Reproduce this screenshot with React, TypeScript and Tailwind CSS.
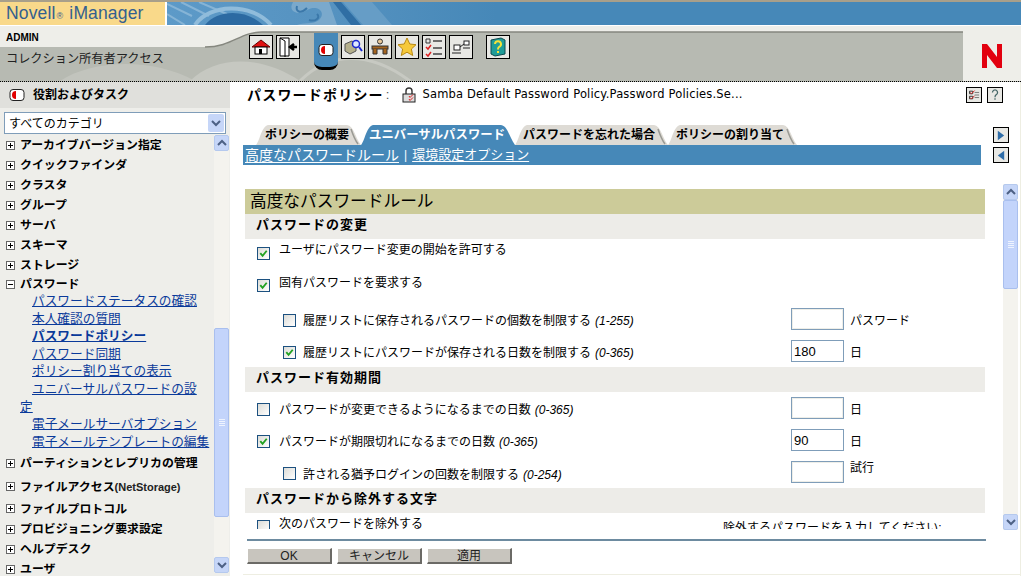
import React from 'react'

const Check = () => (
  <svg viewBox="0 0 12 12" className="w-full h-full">
    <path d="M2.5 5.5 L5 8.5 L9.5 3" fill="none" stroke="#21a121" strokeWidth="2" />
  </svg>
)

const CheckBox = ({ checked }: { checked?: boolean }) => (
  <span className="w-[13px] h-[13px] shrink-0 translate-y-[1px] border border-[#1c5180] bg-gradient-to-br from-[#dcdcd7] to-white">
    {checked && <Check />}
  </span>
)

const ToolButton = ({ children, className = '' }: { children: React.ReactNode; className?: string }) => (
  <div className={`w-[24px] h-[24px] shrink-0 border border-black bg-[#e8e8e4] ${className}`}>
    <svg viewBox="0 0 22 22" className="w-full h-full">{children}</svg>
  </div>
)

const RoleIcon = ({ className = '' }: { className?: string }) => (
  <svg viewBox="0 0 16 14" className={className}>
    <rect x="1" y="1.5" width="14" height="11" rx="3" fill="#fff" stroke="#222" />
    <path d="M7 3 A4 4 0 0 0 7 11 Z" fill="#e00000" />
  </svg>
)

const ScrollButton = ({ up }: { up?: boolean }) => (
  <div className="h-[16px] shrink-0 rounded-[2px] border border-[#b5c9ee] bg-[#c6d6f8] flex items-center justify-center">
    <svg viewBox="0 0 10 8" className="w-[10px] h-[8px]">
      <path d={up ? 'M1 6 L5 2 L9 6' : 'M1 2 L5 6 L9 2'} fill="none" stroke="#4d6185" strokeWidth="2" />
    </svg>
  </div>
)

const Grip = () => (
  <div className="flex flex-col gap-[1px]">
    {[0, 1, 2, 3].map((i) => (
      <div key={i} className="w-[6px] h-px bg-[#eef3fe]" />
    ))}
  </div>
)

const Scrollbar = ({ before, thumb, className = '' }: { before: number; thumb: number; className?: string }) => (
  <div className={`w-[15px] flex flex-col bg-[#f4f3ee] ${className}`}>
    <ScrollButton up />
    <div style={{ height: before }} className="shrink-0" />
    <div style={{ height: thumb }} className="shrink-0 rounded-[2px] border border-[#a9bfee] bg-[#c3d4fb] flex items-center justify-center">
      <Grip />
    </div>
    <div className="flex-1" />
    <ScrollButton />
  </div>
)

const Tree = ({ label, open, h }: { label: React.ReactNode; open?: boolean; h: number }) => (
  <div style={{ height: h }} className="flex items-center pl-[6px] shrink-0">
    <span className="relative w-[9px] h-[9px] border border-[#666] bg-white shrink-0">
      <span className="absolute left-[1px] top-[3px] w-[5px] h-px bg-black" />
      {!open && <span className="absolute left-[3px] top-[1px] w-px h-[5px] bg-black" />}
    </span>
    <span className="ml-[5px] mt-[2px] text-[11.9px] font-bold text-black whitespace-nowrap">{label}</span>
  </div>
)

const SideLink = ({ children, bold }: { children: React.ReactNode; bold?: boolean }) => (
  <div className="pl-[20px] indent-[12px] text-[12.7px] leading-[17.6px] whitespace-nowrap">
    <a className={`underline underline-offset-1 text-[#0a3a9a] ${bold ? 'font-bold' : ''}`}>{children}</a>
  </div>
)

const Sidebar = () => (
  <aside className="w-[230px] shrink-0 h-[494px] bg-[#eeeeea] flex flex-col overflow-hidden">
    <div className="h-[26px] shrink-0 bg-[#e0e0dc] flex items-center pl-[9px]">
      <RoleIcon className="w-[16px] h-[14px]" />
      <span className="ml-[8px] text-[12px] font-bold text-black">役割およびタスク</span>
    </div>
    <div className="h-[27px] shrink-0 pt-[4px] px-[4px]">
      <div className="h-[22px] border border-[#7f9db9] bg-white flex items-center justify-between pl-[4px] pr-px">
        <span className="mt-[2px] text-[12px] text-black">すべてのカテゴリ</span>
        <div className="w-[16px] h-[18px] rounded-[2px] bg-[#c6d6f8] flex items-center justify-center">
          <svg viewBox="0 0 10 8" className="w-[10px] h-[8px]">
            <path d="M1 2 L5 6 L9 2" fill="none" stroke="#4d6185" strokeWidth="2" />
          </svg>
        </div>
      </div>
    </div>
    <div className="flex-1 flex min-h-0">
      <div className="w-[214px] shrink-0 flex flex-col overflow-hidden">
        <Tree h={20} label="アーカイブバージョン指定" />
        <Tree h={20} label="クイックファインダ" />
        <Tree h={20} label="クラスタ" />
        <Tree h={20} label="グループ" />
        <Tree h={20} label="サーバ" />
        <Tree h={20} label="スキーマ" />
        <Tree h={20} label="ストレージ" />
        <Tree h={18} open label="パスワード" />
        <SideLink>パスワードステータスの確認</SideLink>
        <SideLink>本人確認の質問</SideLink>
        <SideLink bold>パスワードポリシー</SideLink>
        <SideLink>パスワード同期</SideLink>
        <SideLink>ポリシー割り当ての表示</SideLink>
        <SideLink>ユニバーサルパスワードの設<br />定</SideLink>
        <SideLink>電子メールサーバオプション</SideLink>
        <SideLink>電子メールテンプレートの編集</SideLink>
        <Tree h={24} label="パーティションとレプリカの管理" />
        <Tree h={23} label={<>ファイルアクセス<span className="text-[11px] text-[#222]">(NetStorage)</span></>} />
        <Tree h={21} label="ファイルプロトコル" />
        <Tree h={20} label="プロビジョニング要求設定" />
        <Tree h={20} label="ヘルプデスク" />
        <Tree h={20} label="ユーザ" />
      </div>
      <Scrollbar before={177} thumb={189} className="h-[438px]" />
    </div>
  </aside>
)

const Tab = ({ label, active, w, first }: { label: string; active?: boolean; w: number; first?: boolean }) => (
  <div style={{ width: w }} className="relative h-[20px] shrink-0">
    <svg viewBox={`0 0 ${w} 20`} className="absolute inset-0 w-full h-full" preserveAspectRatio="none">
      <path
        d={`M0 20 C4 16 5 2 12 0 L${w - 14} 0 C${w - 7} 1 ${w - 6} 12 ${w} 20 Z`}
        fill={active ? '#4688b8' : '#dedbd5'}
      />
      {!active && <path d={`M${w - 10} 4 C${w - 8} 10 ${w - 6} 15 ${w - 3} 19`} fill="none" stroke="#9a9a94" strokeWidth="1.5" />}
    </svg>
    <span className={`absolute top-0 bottom-0 flex items-center font-bold whitespace-nowrap ${first ? 'left-[9px]' : 'left-[8px]'} ${active ? 'text-white text-[12.4px]' : 'text-black text-[12px]'}`}>
      {label}
    </span>
  </div>
)

const Section = ({ title }: { title: string }) => (
  <div className="h-[25px] shrink-0 bg-[#edece8] flex items-center pl-[11px] pb-[4px] text-[13px] font-bold tracking-[1px] text-black">
    {title}
  </div>
)

const Row = ({
  h, level, checked, label, range, shift = 0, value, unit, hasInput, unitShift = 0,
}: {
  h: number; level?: number; checked?: boolean; label: string; range?: string; shift?: number
  value?: string; unit?: string; hasInput?: boolean; unitShift?: number
}) => (
  <div style={{ height: h }} className={`flex items-center shrink-0 text-[12px] text-black ${level ? 'pl-[38px] gap-[7px]' : 'pl-[12px] gap-[9px]'}`}>
    <CheckBox checked={checked} />
    <span style={{ transform: `translateY(${shift + 2}px)` }} className="whitespace-nowrap">
      {label}
      {range && <i className="ml-[4px]">{range}</i>}
    </span>
    {hasInput && (
      <>
        <input
          readOnly
          defaultValue={value}
          className={`ml-auto w-[53px] h-[22px] border border-[#7f9db9] px-[2px] text-[13px] text-black outline-none bg-white ${value ? '' : 'shadow-[inset_1px_1px_0_#eeeee8,inset_-1px_-1px_0_#eeeee8]'}`}
        />
        <span
          style={{ transform: `translateY(${unitShift + 2}px)` }}
          className={`w-[135px] whitespace-nowrap ${level ? '-ml-[1px]' : '-ml-[3px]'}`}
        >
          {unit}
        </span>
      </>
    )}
  </div>
)

const FormPanel = () => (
  <div className="w-[740px] h-[340px] mt-[5px] flex flex-col overflow-hidden">
    <div className="h-[25px] shrink-0 bg-[#cccb99] flex items-center pl-[5px] text-[16.7px] text-black">高度なパスワードルール</div>
    <Section title="パスワードの変更" />
    <Row h={26} checked shift={-4} label="ユーザにパスワード変更の開始を許可する" />
    <Row h={38} checked shift={-3} label="固有パスワードを要求する" />
    <Row h={32} level={1} label="履歴リストに保存されるパスワードの個数を制限する" range="(1-255)" hasInput unit="パスワード" />
    <Row h={32} level={1} checked label="履歴リストにパスワードが保存される日数を制限する" range="(0-365)" hasInput value="180" unit="日" />
    <Section title="パスワード有効期間" />
    <Row h={32} label="パスワードが変更できるようになるまでの日数" range="(0-365)" hasInput unit="日" />
    <Row h={32} checked label="パスワードが期限切れになるまでの日数" range="(0-365)" hasInput value="90" unit="日" />
    <Row h={32} level={1} shift={1} label="許される猶予ログインの回数を制限する" range="(0-254)" hasInput unit="試行" unitShift={-6} />
    <Section title="パスワードから除外する文字" />
    <div className="h-[24px] shrink-0 flex items-center pl-[12px] gap-[9px] text-[12px] text-black">
      <CheckBox />
      <span className="-translate-y-[1px]">次のパスワードを除外する</span>
      <span className="ml-[291px] translate-y-[3px] whitespace-nowrap">除外するパスワードを入力してください:</span>
    </div>
  </div>
)

const Main = () => (
  <main className="flex-1 h-[494px] pl-[13px] flex flex-col overflow-hidden border-r border-[#eeeee2]">
    <div className="h-[26px] shrink-0 flex items-center pl-[4px] pr-[17px]">
      <span className="text-[14px] font-bold tracking-[1.2px] text-black">パスワードポリシー</span>
      <span className="ml-[2px] text-[13px] text-[#555]">:</span>
      <svg viewBox="0 0 16 16" className="ml-[12px] w-[16px] h-[16px]">
        <path d="M5 7 V4 a3 3 0 0 1 6 0 V7" fill="none" stroke="#333" strokeWidth="1.4" />
        <rect x="2" y="7" width="12" height="8" fill="#ddd" stroke="#222" />
        <path d="M8 9 l1 1.5 l3 -3 M8 12 l1 1.5 l3 -3" fill="none" stroke="#d22" />
      </svg>
      <span className="ml-[5px] text-[11.5px] tracking-[0.18px] font-['DejaVu_Sans',sans-serif] text-black">Samba Default Password Policy.Password Policies.Se...</span>
      <ToolButton className="ml-auto !w-[16px] !h-[16px]">
        <path d="M4 5 h5 v4 h-5 z M4 13 h5 v4 h-5 z" fill="none" stroke="#333" strokeWidth="1.5" />
        <path d="M5 7 l2 2 l5 -5 M5 15 l2 2 l5 -5" fill="none" stroke="#d22" strokeWidth="1.5" />
        <path d="M12 7 h7 M12 11 h7 M12 15 h7" stroke="#777" strokeWidth="1.5" />
      </ToolButton>
      <ToolButton className="ml-[5px] !w-[16px] !h-[16px]">
        <path d="M7 7 a4 4 0 1 1 6 3.5 c-2 1 -2 2 -2 4 M11 16 v2.5" fill="none" stroke="#466" strokeWidth="2" />
      </ToolButton>
    </div>
    <div className="mt-[17px] flex shrink-0">
      <div className="w-[738px] shrink-0">
        <div className="flex h-[20px] pl-[13px]">
          <Tab first w={105} label="ポリシーの概要" />
          <Tab active w={154} label="ユニバーサルパスワード" />
          <Tab w={153} label="パスワードを忘れた場合" />
          <Tab w={129} label="ポリシーの割り当て" />
        </div>
        <div className="h-[20px] bg-[#4688b8] flex items-center pl-[2px] text-white">
          <a className="text-[14px] underline underline-offset-2">高度なパスワードルール</a>
          <span className="mx-[5px] text-[12px]">|</span>
          <a className="text-[13px] underline underline-offset-2">環境設定オプション</a>
        </div>
      </div>
      <div className="ml-[12px] pt-[2px] flex flex-col gap-[4px]">
        <div className="w-[16px] h-[16px] border border-black bg-[#e8e8e4] flex items-center justify-center">
          <svg viewBox="0 0 10 12" className="w-[8px] h-[11px]"><path d="M1 0 L9 6 L1 12 Z" fill="#2f6da8" /></svg>
        </div>
        <div className="w-[16px] h-[16px] border border-black bg-[#e8e8e4] flex items-center justify-center">
          <svg viewBox="0 0 10 12" className="w-[8px] h-[11px]"><path d="M9 0 L1 6 L9 12 Z" fill="#2f6da8" /></svg>
        </div>
      </div>
    </div>
    <div className="mt-[19px] flex shrink-0 h-[346px] pl-[2px]">
      <FormPanel />
      <Scrollbar before={0} thumb={89} className="ml-[18px] h-[346px]" />
    </div>
    <div className="mt-[9px] ml-[4px] w-[739px] h-[2px] shrink-0 bg-[#6d8ba0]" />
    <div className="mt-[7px] ml-[4px] flex gap-[5px] shrink-0">
      {['OK', 'キャンセル', '適用'].map((b) => (
        <button key={b} className="w-[85px] h-[16px] bg-[#c8c5be] border-r-2 border-b-2 border-[#6b6a66] border-t border-l border-t-white border-l-white flex items-center justify-center text-[12px] text-[#222]">
          {b}
        </button>
      ))}
    </div>
    <div className="mt-[10px] h-px shrink-0 bg-[#eeeee2]" />
  </main>
)

const Header = () => (
  <header className="shrink-0">
    <div className="h-[26px] border-t-2 border-[#a89f8a] border-b border-b-white flex bg-[#4688b8]">
      <div className="w-[165px] shrink-0 bg-[#f9d98a] pl-[6px] flex items-center text-[17.5px] tracking-[0.15px] text-[#33608f]">
        Novell<span className="text-[9px] mt-[6px] mx-[1px]">®</span>&nbsp;iManager
      </div>
      <div className="w-[2px] bg-white" />
      <div className="relative w-[330px] overflow-hidden bg-gradient-to-r from-[#5d9ac8] via-[#5592c0] to-[#4688b8]">
        <svg viewBox="0 0 330 23" className="absolute inset-0 w-full h-full">
          <path d="M0 2 L25 14 M14 0 L42 14 M32 0 L60 12 M0 12 L18 23" stroke="#86b4d6" strokeWidth="2" fill="none" />
          <path d="M38 23 C50 8 78 6 96 23 Z" fill="#2c6aa2" />
          <path d="M28 23 C42 2 84 0 104 23" fill="none" stroke="#90bcdb" strokeWidth="4" />
          <path d="M126 0 C120 10 132 14 140 8 C150 2 160 10 152 18 C146 23 136 20 130 23 H170 L162 0 Z" fill="#7aa9cc" />
          <path d="M130 4 C128 10 134 12 140 6 M150 12 C154 16 148 20 142 18" fill="none" stroke="#3b78aa" strokeWidth="2" />
          <path d="M166 0 L174 0 L194 23 L184 23 Z" fill="#2f6ea4" />
          <path d="M176 0 H205 L225 23 H196 Z" fill="#6fa2c9" opacity="0.7" />
        </svg>
      </div>
    </div>
    <div className="relative h-[56px] flex bg-[#b7bab2] border-b border-dotted border-black">
      <svg viewBox="0 0 963 55" className="absolute inset-0 w-[963px] h-[55px]">
        <path d="M60 55 C90 35 150 30 195 55 Z" fill="#c2c4bd" />
        <path d="M190 55 C215 30 260 28 300 55 Z" fill="#c6c8c1" />
        <path d="M300 55 C330 25 370 25 410 55" fill="none" stroke="#c7c9c2" strokeWidth="3" />
        <path d="M0 0 H963 V6 H262 C240 6 232 21 205 21 H0 Z" fill="#eeeee9" />
        <path d="M205 21 C232 21 240 6 262 6 H963" fill="none" stroke="#85877f" strokeWidth="1.5" />
      </svg>
      <div className="relative w-[249px] shrink-0 pl-[6px] flex flex-col">
        <span className="mt-[5px] h-[14px] leading-[14px] text-[10px] font-bold text-black">ADMIN</span>
        <span className="mt-[5px] text-[12.2px] text-[#222]">コレクション所有者アクセス</span>
      </div>
      <div className="relative flex items-start pt-[9px] gap-[3px]">
        <ToolButton>
          <path d="M2 11 L11 4 L20 11 Z" fill="#e01010" stroke="#600" />
          <rect x="5" y="11" width="12" height="7" fill="#fff" stroke="#000" />
          <rect x="9" y="13" width="3" height="5" fill="#000" />
        </ToolButton>
        <ToolButton>
          <path d="M3 2 H12 V20 H3 Z M3 2 L8 5 V21" fill="#fff" stroke="#000" />
          <path d="M20 11 H14 M17 8 L13 11 L17 14" fill="none" stroke="#000" strokeWidth="2.5" />
        </ToolButton>
        <div className="-mt-[2px] ml-[11px] w-[24px] h-[37px] bg-[#4688b8] border-b-[3px] border-black rounded-b-[8px] flex items-center justify-center">
          <RoleIcon className="w-[16px] h-[14px]" />
        </div>
        <ToolButton>
          <path d="M3 8 L10 5 L14 8 V15 L8 18 L3 15 Z" fill="#b5b08c" stroke="#555" />
          <circle cx="14" cy="8" r="3.5" fill="#dfe8ff" stroke="#1a28d0" strokeWidth="1.5" />
          <path d="M17 11 L20 15" stroke="#1a28d0" strokeWidth="2" />
        </ToolButton>
        <ToolButton>
          <circle cx="11" cy="5.5" r="2.5" fill="#e8c89a" stroke="#333" />
          <rect x="3" y="10" width="16" height="3" fill="#a5651f" stroke="#333" />
          <path d="M4 13 V18 H8 V13 M14 13 V18 H18 V13" fill="#a5651f" stroke="#333" />
        </ToolButton>
        <ToolButton>
          <path d="M11 2 L13.8 8 L20 8.7 L15.4 13 L16.7 19.5 L11 16.2 L5.3 19.5 L6.6 13 L2 8.7 L8.2 8 Z" fill="#f6c93a" stroke="#b98a14" />
        </ToolButton>
        <ToolButton>
          <path d="M3 3 h4 v4 h-4 z" fill="none" stroke="#333" />
          <path d="M3 11 l2 2 l3 -4 M3 18 l2 2 l3 -4" fill="none" stroke="#d22" strokeWidth="1.5" />
          <path d="M10 5 h9 M10 12 h9 M10 18 h9" stroke="#444" strokeWidth="1.5" />
        </ToolButton>
        <ToolButton>
          <rect x="4" y="9" width="6" height="5" fill="#fff" stroke="#222" />
          <rect x="14" y="5" width="5" height="4" fill="#fff" stroke="#222" />
          <path d="M2 17 H11 M10 11 L14 8 M13 12 H20" stroke="#222" />
        </ToolButton>
        <ToolButton className="ml-[10px]">
          <path d="M4 4 L14 2 L18 4 V18 L8 20 L4 18 Z" fill="#1f9c98" stroke="#0d4b50" />
          <path d="M8 8 a3 3 0 1 1 4 3 c-1 .7 -1 1 -1 2.5 M11 15 v2" fill="none" stroke="#f5e33a" strokeWidth="2" />
        </ToolButton>
      </div>
      <div className="relative ml-auto w-[58px] shrink-0 bg-[#eeeee9] flex items-center justify-center pt-[5px]">
        <svg viewBox="0 0 22 24" className="w-[22px] h-[24px]">
          <path d="M1 24 V0 H6 L16 13 V0 H21 V24 H16 L6 11 V24 Z" fill="#e2000f" />
        </svg>
      </div>
    </div>
  </header>
)

export default function App() {
  return (
    <div className="w-[1021px] h-[576px] overflow-hidden flex flex-col bg-white font-['Liberation_Sans','Noto_Sans_CJK_JP',sans-serif]">
      <Header />
      <div className="flex">
        <Sidebar />
        <Main />
      </div>
    </div>
  )
}
